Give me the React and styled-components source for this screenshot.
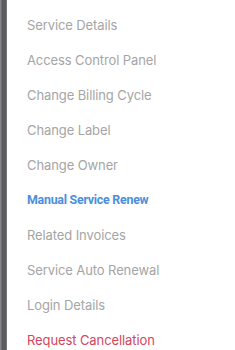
import React from 'react'
import styled, { createGlobalStyle } from 'styled-components'

const GlobalStyle = createGlobalStyle`
  html, body {
    margin: 0;
    padding: 0;
    background: #ffffff;
  }
`

const StyledPage = styled('div')`
  display: flex;
  width: 235px;
  height: 350px;
  overflow: hidden;
  background-color: white;
`

const StyledEdge = styled('div')`
  width: 7px;
  flex-shrink: 0;
  background: linear-gradient(to right, #85858a 0, #85858a 1px, #5a5a5f 2px, #5c5c61 6px, #8d8d90 7px);
`

const StyledMenu = styled('ul')`
  list-style: none;
  margin: 0;
  padding: 7px 0 0 20px;
  display: flex;
  flex-direction: column;
`

const StyledItem = styled('li')`
  height: 35px;
  flex-shrink: 0;
  display: flex;
  align-items: center;
  font-family: ${props =>
    props.$active ? "Roboto, 'Noto Sans', sans-serif" : "Inter, 'Noto Sans', sans-serif"};
  font-size: ${props => (props.$active ? '12.4px' : '13px')};
  letter-spacing: ${props => (props.$active ? '-0.25px' : '-0.1px')};
  font-weight: ${props => (props.$active ? 700 : 400)};
  color: ${props =>
    props.$active ? '#4a8fdc' : props.$danger ? '#d2475d' : '#a5a5a5'};
  white-space: nowrap;
  cursor: pointer;
`

const items = [
  { label: 'Service Details' },
  { label: 'Access Control Panel' },
  { label: 'Change Billing Cycle' },
  { label: 'Change Label' },
  { label: 'Change Owner' },
  { label: 'Manual Service Renew', active: true },
  { label: 'Related Invoices' },
  { label: 'Service Auto Renewal' },
  { label: 'Login Details' },
  { label: 'Request Cancellation', danger: true },
]

const App = () => {
  return (
    <>
      <GlobalStyle />
      <StyledPage>
        <StyledEdge />
        <StyledMenu>
          {items.map(item => (
            <StyledItem key={item.label} $active={item.active} $danger={item.danger}>
              {item.label}
            </StyledItem>
          ))}
        </StyledMenu>
      </StyledPage>
    </>
  )
}

export default App
